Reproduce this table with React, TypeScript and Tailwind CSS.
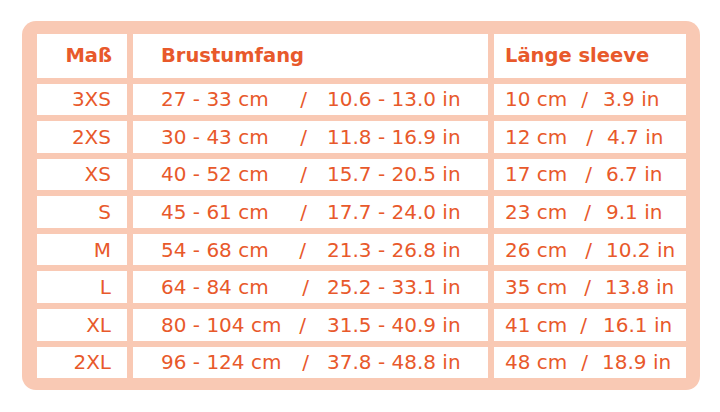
const rows = [
  { size: "3XS", cm: "27 - 33 cm", inch: "10.6 - 13.0 in", slashPad: "pr-[20px]", len: "10 cm", lenIn: "3.9 in", lenBox: "w-[98px] pr-[15px]" },
  { size: "2XS", cm: "30 - 43 cm", inch: "11.8 - 16.9 in", slashPad: "pr-[20px]", len: "12 cm", lenIn: "4.7 in", lenBox: "w-[102px] pr-[14px]" },
  { size: "XS", cm: "40 - 52 cm", inch: "15.7 - 20.5 in", slashPad: "pr-[20px]", len: "17 cm", lenIn: "6.7 in", lenBox: "w-[101px] pr-[14px]" },
  { size: "S", cm: "45 - 61 cm", inch: "17.7 - 24.0 in", slashPad: "pr-[20px]", len: "23 cm", lenIn: "9.1 in", lenBox: "w-[101px] pr-[15px]" },
  { size: "M", cm: "54 - 68 cm", inch: "21.3 - 26.8 in", slashPad: "pr-[21px]", len: "26 cm", lenIn: "10.2 in", lenBox: "w-[101px] pr-[14px]" },
  { size: "L", cm: "64 - 84 cm", inch: "25.2 - 33.1 in", slashPad: "pr-[18px]", len: "35 cm", lenIn: "13.8 in", lenBox: "w-[100px] pr-[14px]" },
  { size: "XL", cm: "80 - 104 cm", inch: "31.5 - 40.9 in", slashPad: "pr-[21px]", len: "41 cm", lenIn: "16.1 in", lenBox: "w-[98px] pr-[16px]" },
  { size: "2XL", cm: "96 - 124 cm", inch: "37.8 - 48.8 in", slashPad: "pr-[18px]", len: "48 cm", lenIn: "18.9 in", lenBox: "w-[97px] pr-[14px]" },
];

export default function App() {
  return (
    <div className="w-[720px] h-[412px] bg-white pt-[21px] pl-[22px] font-['DejaVu_Sans',sans-serif] text-[#e8592b]">
      <div className="w-[678px] rounded-[14px] bg-[#f9c9b4] pl-[15px] pr-[14px] pt-[13px] pb-[12px] grid grid-cols-[90px_355px_192px] gap-[6px]">
        <div className="h-[43.5px] bg-white flex items-center justify-end pr-[15px] text-[19.5px] font-bold">Maß</div>
        <div className="h-[43.5px] bg-white flex items-center pl-[28px] text-[19.5px] font-bold">Brustumfang</div>
        <div className="h-[43.5px] bg-white flex items-center pl-[11px] text-[19.5px] font-bold">Länge sleeve</div>

        {rows.map((r) => (
          <>
            <div key={r.size + "a"} className="h-[31.6px] bg-white flex items-center justify-end pr-[16px] text-[20px]">
              {r.size}
            </div>
            <div key={r.size + "b"} className="h-[31.6px] bg-white flex items-center pl-[28px] text-[20px] whitespace-nowrap">
              <span className={`flex w-[166px] justify-between ${r.slashPad}`}>
                <span>{r.cm}</span>
                <span>/</span>
              </span>
              <span>{r.inch}</span>
            </div>
            <div key={r.size + "c"} className="h-[31.6px] bg-white flex items-center pl-[11px] text-[20px] whitespace-nowrap">
              <span className={`flex justify-between ${r.lenBox}`}>
                <span>{r.len}</span>
                <span>/</span>
              </span>
              <span>{r.lenIn}</span>
            </div>
          </>
        ))}
      </div>
    </div>
  );
}
